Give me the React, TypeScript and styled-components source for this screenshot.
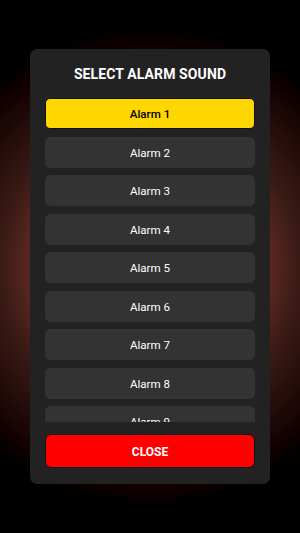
import styled, { createGlobalStyle } from 'styled-components';

const alarms = ['Alarm 1', 'Alarm 2', 'Alarm 3', 'Alarm 4', 'Alarm 5', 'Alarm 6', 'Alarm 7', 'Alarm 8', 'Alarm 9'];

export default function App() {
  const selected = 0;

  return (
    <>
      <GlobalStyle />
      <Screen>
        <Modal>
          <Title>SELECT ALARM SOUND</Title>
          <List>
            {alarms.map((name, i) => (
              <AlarmButton key={name} $active={i === selected}>
                {name}
              </AlarmButton>
            ))}
          </List>
          <CloseButton>CLOSE</CloseButton>
        </Modal>
      </Screen>
    </>
  );
}

const GlobalStyle = createGlobalStyle`
  html, body {
    margin: 0;
    padding: 0;
    background: #000;
    font-family: Roboto, "Liberation Sans", sans-serif;
  }
`;

const Screen = styled.div`
  display: flex;
  align-items: center;
  justify-content: center;

  width: 300px;
  height: 533px;

  background: radial-gradient(
    circle at 50% 50%,
    #8a3a2e 0px,
    #5a2820 120px,
    #3a1a15 150px,
    #100000 222px,
    #000 240px
  );
`;

const Modal = styled.div`
  display: flex;
  flex-direction: column;

  width: 240px;
  height: 435px;

  padding: 17px 15px 16px 15px;
  box-sizing: border-box;

  background-color: #222;
  border-radius: 7px;
`;

const Title = styled.h2`
  margin: 0 0 15px 0;

  color: #fff;
  font-size: 14px;
  font-weight: 700;
  line-height: 17px;
  letter-spacing: 0.1px;
  text-align: center;
`;

const List = styled.div`
  display: flex;
  flex-direction: column;
  row-gap: 7.5px;

  flex: 1;
  min-height: 0;
  overflow: hidden;
`;

const AlarmButton = styled.button<{ $active: boolean }>`
  flex-shrink: 0;

  height: 31px;
  padding: 1px 0 0 0;

  border: 1px solid ${({ $active }) => ($active ? '#111' : '#333')};
  border-radius: 5px;

  background-color: ${({ $active }) => ($active ? '#ffd700' : '#333')};
  color: ${({ $active }) => ($active ? '#000' : '#fff')};

  font-family: Roboto, "Liberation Sans", sans-serif;
  font-size: 11.6px;
  font-weight: ${({ $active }) => ($active ? 500 : 400)};
`;

const CloseButton = styled.button`
  flex-shrink: 0;

  height: 34px;
  margin-top: 12px;
  padding: 2px 0 0 0;

  border: 1px solid #111;
  border-radius: 6px;

  background-color: #ff0000;
  color: #fff;

  font-family: Roboto, "Liberation Sans", sans-serif;
  font-size: 12px;
  font-weight: 700;
`;
